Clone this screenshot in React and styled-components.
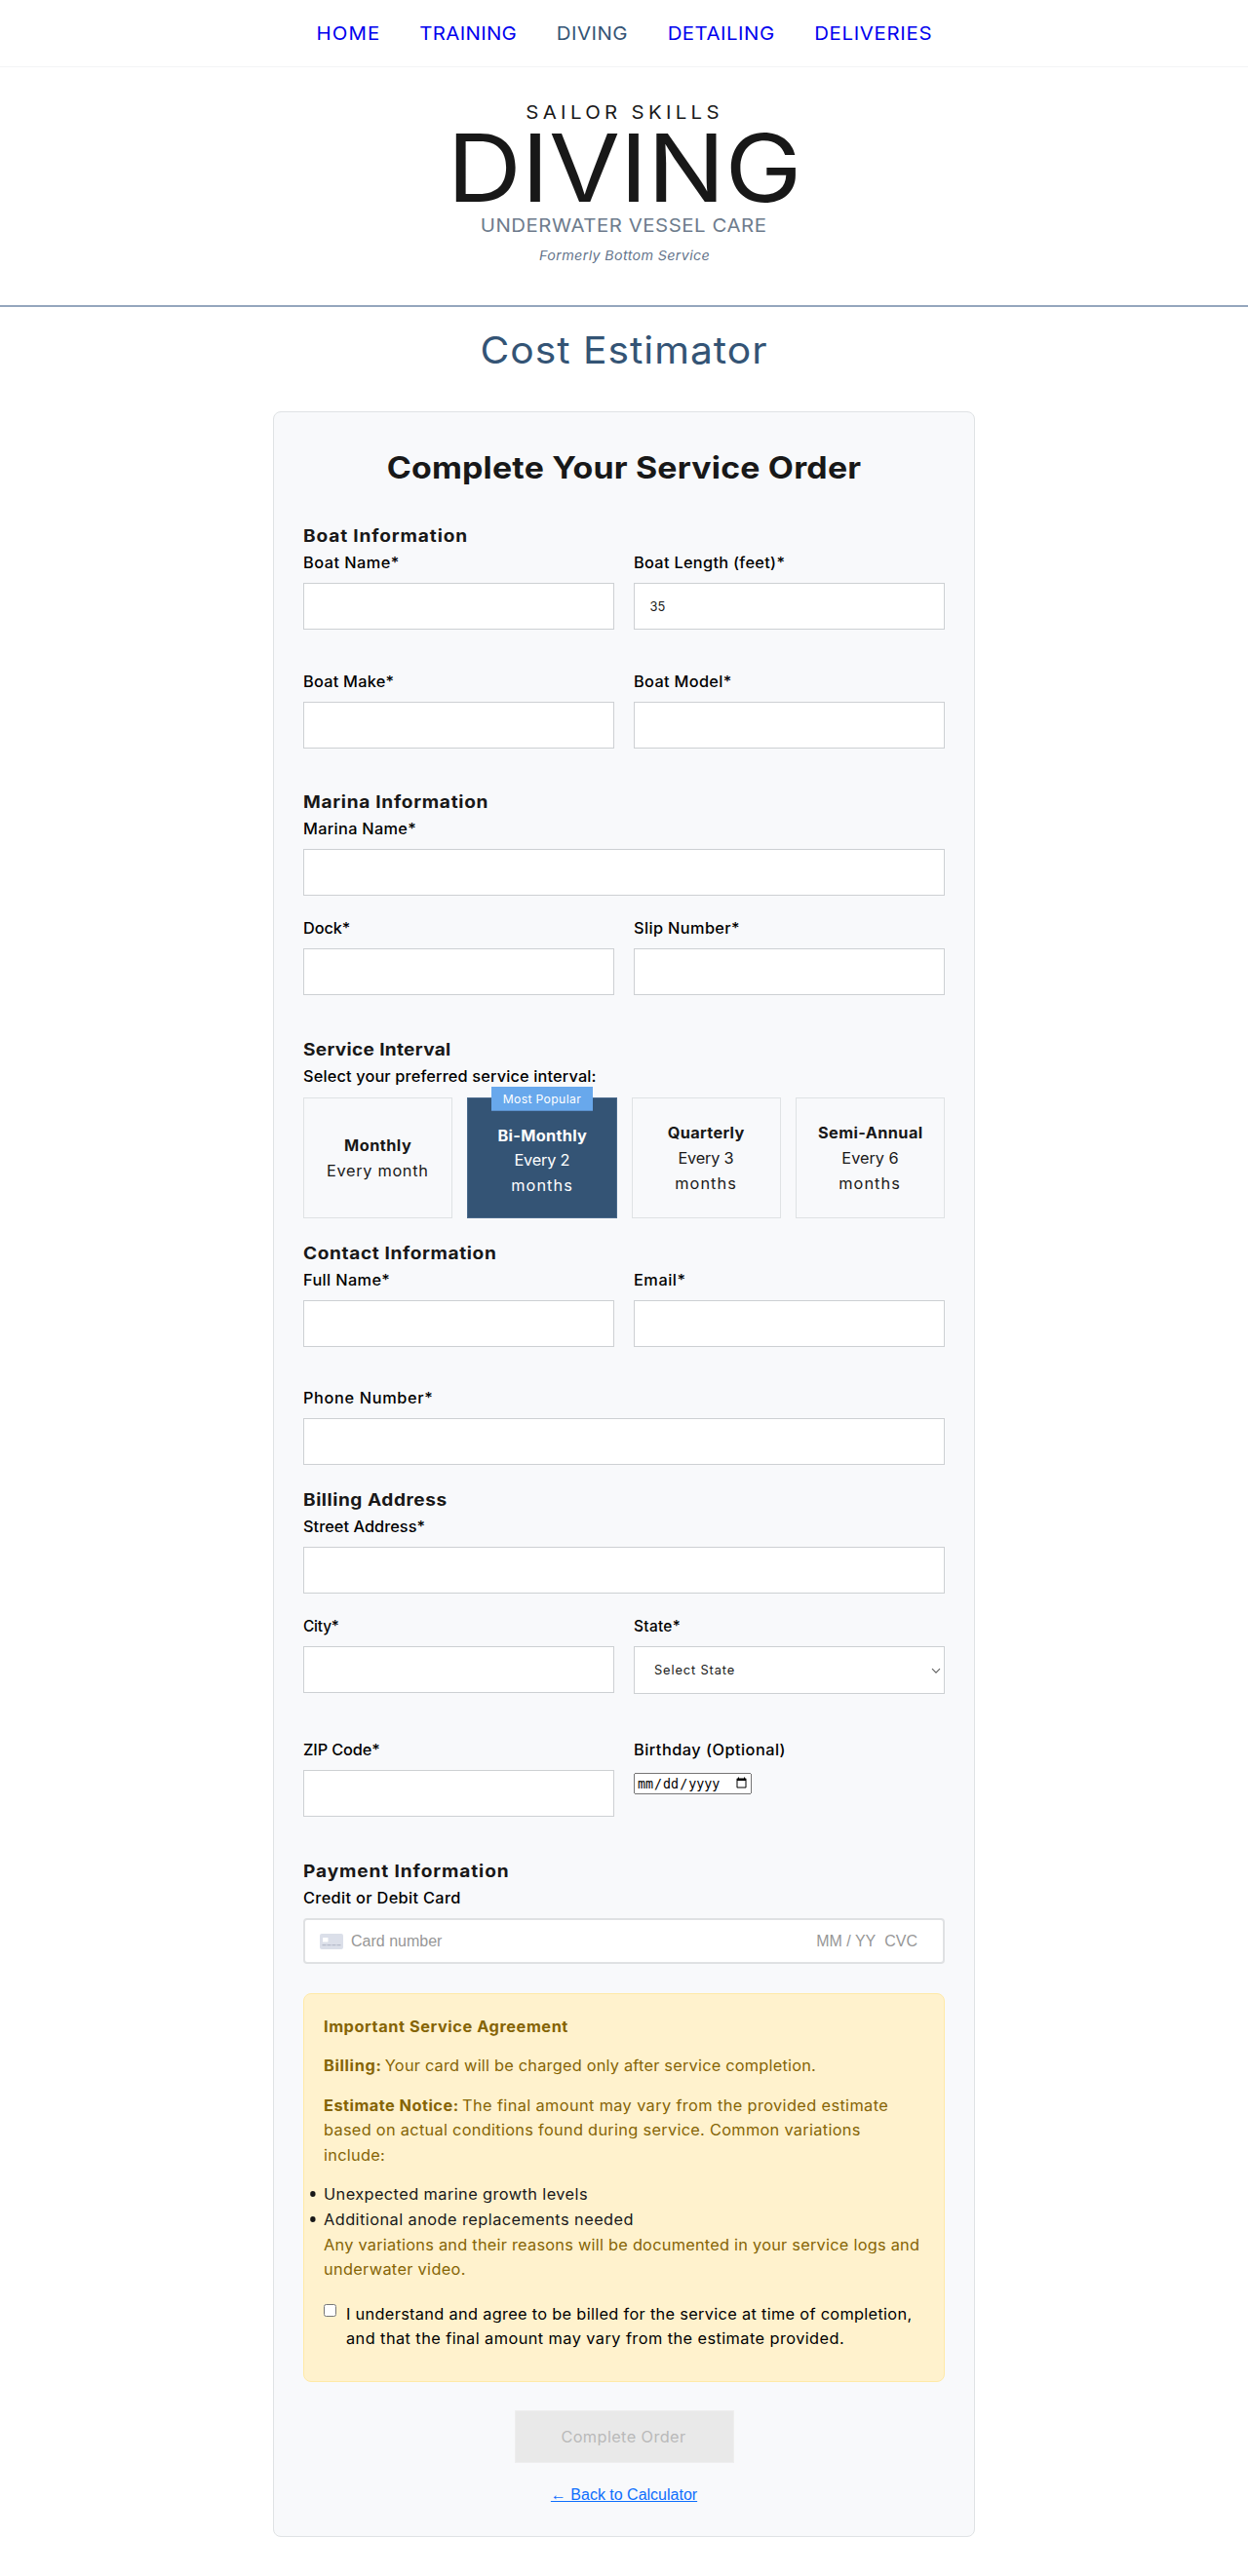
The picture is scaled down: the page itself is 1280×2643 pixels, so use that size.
import React from "react";
import styled, { createGlobalStyle, css } from "styled-components";

const sans = `Inter, "Open Sans", sans-serif`;
const arial = `"Liberation Sans", Arial, sans-serif`;

/* Wide letterforms: stretches the glyphs and sets the tracking of one text. */
const wide = css`
  letter-spacing: ${(p) => p.$ls || 0}px;
  transform: scaleX(${(p) => p.$stretch || 1.06});
  transform-origin: left center;
`;

const wideCentered = css`
  ${wide}
  transform-origin: center;
`;

const GlobalStyle = createGlobalStyle`
  *, *::before, *::after { box-sizing: border-box; }
  body { margin: 0; background: #fff; font-family: ${sans}; font-size: 15.4px; color: #181818; }
`;

const Nav = styled.nav`
  height: 69px;
  border-bottom: 1px solid #f3f4f5;
`;

const NavList = styled.div`
  display: flex;
  justify-content: center;
  gap: 38.7px;
  transform: scaleX(1.06);
`;

const NavLink = styled.a`
  letter-spacing: ${(p) => p.$ls}px;
  margin-right: ${(p) => -p.$ls}px;
  font-size: 19.26px;
  line-height: 68px;
  text-decoration: none;
  color: ${(p) => (p.$active ? "#345475" : "#0000ee")};
`;

const Header = styled.header`
  display: flex;
  flex-direction: column;
  align-items: center;
  height: 246px;
  padding-top: 31px;
  border-bottom: 2px solid #94a6bd;
`;

const Brand = styled.div`
  ${wideCentered}
  padding-left: 2px;
  font-size: 19.26px;
  line-height: 30px;
`;

const Wordmark = styled.h1`
  ${wideCentered}
  margin: 0;
  font-size: 96.3px;
  font-weight: 400;
  line-height: 84px;
`;

const Tagline = styled.div`
  ${wideCentered}
  margin-top: 2px;
  font-size: 19.26px;
  line-height: 30px;
  color: #6d7b8c;
`;

const Former = styled.div`
  ${wideCentered}
  margin-top: 4px;
  padding-left: 1px;
  font-size: 13.5px;
  font-style: italic;
  line-height: 24px;
  color: #64748b;
`;

const PageTitle = styled.h2`
  ${wideCentered}
  margin: 14px 0 33px;
  font-size: 38.5px;
  font-weight: 400;
  line-height: 60px;
  text-align: center;
  color: #345475;
`;

const Card = styled.main`
  width: 720px;
  margin: 0 auto 40px;
  padding: 36.8px 30px 32px;
  background: #f8f9fb;
  border: 1px solid #dfe2e4;
  border-radius: 8px;
`;

const CardTitle = styled.h2`
  ${wideCentered}
  margin: 0 0 35.9px;
  font-size: 30.8px;
  font-weight: 700;
  line-height: 40px;
  text-align: center;
  white-space: nowrap;
`;

const Section = styled.section`
  margin-bottom: ${(p) => p.$after}px;
`;

const Heading = styled.h3`
  ${wide}
  width: fit-content;
  margin: 0 0 1px;
  font-size: 17.33px;
  font-weight: 700;
  line-height: 28px;
`;

const Row = styled.div`
  display: grid;
  grid-template-columns: ${(p) => (p.$single ? "1fr" : "1fr 1fr")};
  column-gap: 20px;
  align-items: start;
  margin-bottom: ${(p) => p.$after || 0}px;
`;

const Label = styled.label`
  ${wide}
  display: block;
  width: fit-content;
  height: 26px;
  margin-bottom: 7.5px;
  font-weight: 500;
  line-height: 26px;
  color: #000;
  white-space: nowrap;
`;

const Input = styled.input`
  display: block;
  width: 100%;
  height: 48px;
  padding: 0 15.5px;
  background: #fff;
  border: 1px solid #cdd0d3;
  border-radius: 0;
  font: 400 12.84px ${sans};
  color: #181818;
`;

const SelectBox = styled.div`
  position: relative;
`;

const Select = styled.select`
  display: block;
  appearance: none;
  width: 100%;
  height: 49px;
  padding: 0 0 0 20px;
  background: #fff;
  border: 1px solid #cdd0d3;
  border-radius: 0;
  font: 400 12.84px ${sans};
  letter-spacing: 0.86px;
  color: #181818;
`;

const Chevron = styled.svg`
  position: absolute;
  top: 22px;
  right: 4px;
  pointer-events: none;
`;

const DateInput = styled.input`
  display: block;
  width: 121px;
  height: 22px;
  margin-top: 10.5px;
`;

const Tiles = styled.div`
  display: grid;
  grid-template-columns: repeat(4, 1fr);
  gap: 15px;
  margin-top: 8.8px;
`;

const Tile = styled.div`
  position: relative;
  display: flex;
  flex-direction: column;
  align-items: center;
  justify-content: center;
  height: 123.5px;
  padding-top: ${(p) => (p.$selected ? 6 : 1)}px;
  line-height: 25.6px;
  background: ${(p) => (p.$selected ? "#345475" : "transparent")};
  border: 1px solid ${(p) => (p.$selected ? "#4a6a8c" : "#dfe2e4")};
  color: ${(p) => (p.$selected ? "#fff" : "#181818")};
`;

const TileName = styled.strong`
  ${wideCentered}
  white-space: nowrap;
`;

const TileText = styled.span`
  ${wideCentered}
`;

const Badge = styled.span`
  position: absolute;
  top: -12px;
  left: 50%;
  width: 104px;
  height: 25px;
  transform: translateX(-50%);
  border-bottom: 1px solid #5a90cb;
  background: #68a8ec;
  font-size: 12.2px;
  line-height: 25px;
  letter-spacing: 0.35px;
  text-align: center;
  color: #fff;
`;

const CardField = styled.div`
  display: flex;
  align-items: center;
  height: 47px;
  padding: 0 26px 0 15px;
  background: #fff;
  border: 2px solid #dfe1e3;
  border-radius: 4px;
  font: 16px ${arial};
  color: #979797;
`;

const CardNumber = styled.span`
  flex: 1;
  margin-left: 8px;
`;

const Expiry = styled.span`
  margin-right: 9px;
`;

const Agreement = styled.section`
  padding: 20.6px 20px 30px;
  background: #fff2cd;
  border: 1px solid #ffeaa7;
  border-radius: 8px;
  line-height: 25.6px;
  color: #856404;
`;

const AgreementTitle = styled.h4`
  ${wide}
  width: fit-content;
  margin: 0 0 14.4px;
  font-size: 15.4px;
  font-weight: 700;
`;

const Paragraph = styled.p`
  margin: 0 0 ${(p) => p.$after}px;
`;

const Line = styled.span`
  ${wide}
  display: block;
  width: fit-content;
  white-space: nowrap;
`;

const Strong = styled.strong`
  letter-spacing: ${(p) => p.$ls}px;
  margin-right: -1.4px;
`;

const Reasons = styled.ul`
  margin: 0;
  padding: 0;
  list-style: none;
  color: #181818;
`;

const Reason = styled.li`
  ${wide}
  width: fit-content;
  line-height: 26px;

  &::before {
    content: "";
    display: inline-block;
    width: 5.6px;
    height: 6px;
    margin: 0 7.6px 0 -13.2px;
    border-radius: 50%;
    background: #181818;
    vertical-align: 2.2px;
  }
`;

const Consent = styled.label`
  display: flex;
  align-items: flex-start;
  color: #000;
`;

const Checkbox = styled.input`
  width: 13px;
  height: 13px;
  margin: 2px 10px 0 0;
`;

const Submit = styled.button`
  display: block;
  width: 225px;
  height: 54px;
  margin: 29.2px auto 22.5px;
  padding: 0 1.5px 0 0;
  background: #e9e9e9;
  border: 1px solid #eeeeee;
  font: 400 15.4px ${sans};
  color: #b9b9b9;
`;

const SubmitText = styled.span`
  ${wideCentered}
  display: inline-block;
`;

const BackLink = styled.a`
  display: block;
  width: fit-content;
  margin: 0 auto;
  font: 16px/20px ${arial};
  color: #0d6efd;
  text-decoration: underline;
`;

const Field = ({ label, ls, stretch, children, value }) => (
  <div>
    <Label $ls={ls} $stretch={stretch}>{label}</Label>
    {children || <Input type="text" defaultValue={value} />}
  </div>
);

const CardIcon = () => (
  <svg width="24" height="16" viewBox="0 0 24 16">
    <rect width="24" height="16" rx="2" fill="#dbdfe9" />
    <rect x="3" y="4" width="5.5" height="4.5" rx="0.6" fill="#fff" />
    <path d="M2.5 11.7h19" stroke="#b5bbca" strokeWidth="1.2" strokeDasharray="4 1" />
  </svg>
);

const links = [
  ["HOME", 1.07],
  ["TRAINING", 0.29],
  ["DIVING", 0.45],
  ["DETAILING", 0.46],
  ["DELIVERIES", 0.63],
];

const intervals = [
  { name: "Monthly", ls: 0.43, lines: [["Every month", 0.64]] },
  { name: "Bi-Monthly", ls: 0.28, lines: [["Every 2", -0.18], ["months", 1]], popular: true },
  { name: "Quarterly", ls: 0.29, lines: [["Every 3", -0.18], ["months", 1]] },
  { name: "Semi-Annual", ls: 0.37, lines: [["Every 6", -0.03], ["months", 1]] },
];

export default function App() {
  return (
    <>
      <GlobalStyle />
      <Nav>
        <NavList>
          {links.map(([text, ls]) => (
            <NavLink key={text} $ls={ls} $active={text === "DIVING"}>{text}</NavLink>
          ))}
        </NavList>
      </Nav>
      <Header>
        <Brand $ls={4.06}>SAILOR SKILLS</Brand>
        <Wordmark $ls={-0.2} $stretch={1.1}>DIVING</Wordmark>
        <Tagline $ls={0.49}>UNDERWATER VESSEL CARE</Tagline>
        <Former $ls={0.33}>Formerly Bottom Service</Former>
      </Header>
      <PageTitle $ls={0.92}>Cost Estimator</PageTitle>
      <Card>
        <CardTitle $ls={0.18} $stretch={1.1}>Complete Your Service Order</CardTitle>

        <Section $after={40.4}>
          <Heading $ls={0.78} $stretch={1.1}>Boat Information</Heading>
          <Row $after={40.6}>
            <Field label="Boat Name*" ls={0.44} />
            <Field label="Boat Length (feet)*" ls={0.29} value="35" />
          </Row>
          <Row>
            <Field label="Boat Make*" ls={0.23} />
            <Field label="Boat Model*" ls={0.31} />
          </Row>
        </Section>

        <Section $after={41.2}>
          <Heading $ls={0.64} $stretch={1.1}>Marina Information</Heading>
          <Row $single $after={20.8}>
            <Field label="Marina Name*" ls={0.29} />
          </Row>
          <Row>
            <Field label="Dock*" ls={-0.09} />
            <Field label="Slip Number*" ls={0.36} />
          </Row>
        </Section>

        <Section $after={21.7}>
          <Heading $ls={0.29} $stretch={1.1}>Service Interval</Heading>
          <Field label="Select your preferred service interval:" ls={0.14}>
            <Tiles>
              {intervals.map((it) => (
                <Tile key={it.name} $selected={it.popular}>
                  {it.popular && <Badge>Most Popular</Badge>}
                  <TileName $ls={it.ls}>{it.name}</TileName>
                  {it.lines.map(([text, ls]) => (
                    <TileText key={text} $ls={ls}>{text}</TileText>
                  ))}
                </Tile>
              ))}
            </Tiles>
          </Field>
        </Section>

        <Section $after={21.3}>
          <Heading $ls={0.56} $stretch={1.1}>Contact Information</Heading>
          <Row $after={39.7}>
            <Field label="Full Name*" ls={0.34} />
            <Field label="Email*" ls={0.5} />
          </Row>
          <Row $single>
            <Field label="Phone Number*" ls={0.61} />
          </Row>
        </Section>

        <Section $after={41.5}>
          <Heading $ls={0.49} $stretch={1.1}>Billing Address</Heading>
          <Row $single $after={20.8}>
            <Field label="Street Address*" ls={0.04} />
          </Row>
          <Row $after={44.2}>
            <Field label="City*" ls={-0.19} stretch={1} />
            <Field label="State*" ls={0.32} stretch={1}>
              <SelectBox>
                <Select>
                  <option>Select State</option>
                </Select>
                <Chevron width="10" height="7" viewBox="0 0 10 7" fill="none">
                  <path d="M1 1.2 5 5.2 9 1.2" stroke="#5f5f5f" strokeWidth="1.1" />
                </Chevron>
              </SelectBox>
            </Field>
          </Row>
          <Row>
            <Field label="ZIP Code*" ls={-0.11} />
            <Field label="Birthday (Optional)" ls={0.45}>
              <DateInput type="date" />
            </Field>
          </Row>
        </Section>

        <Section $after={30}>
          <Heading $ls={0.81} $stretch={1.1}>Payment Information</Heading>
          <Field label="Credit or Debit Card" ls={0.32}>
            <CardField>
              <CardIcon />
              <CardNumber>Card number</CardNumber>
              <Expiry>MM / YY</Expiry>
              <span>CVC</span>
            </CardField>
          </Field>
        </Section>

        <Agreement>
          <AgreementTitle $ls={0.54}>Important Service Agreement</AgreementTitle>
          <Paragraph $after={15.4}>
            <Line $ls={0.21}>
              <Strong $ls={0.6}>Billing:</Strong> Your card will be charged only after service completion.
            </Line>
          </Paragraph>
          <Paragraph $after={14.2}>
            <Line $ls={0.36}>
              <Strong $ls={0.46}>Estimate Notice:</Strong> The final amount may vary from the provided estimate
            </Line>
            <Line $ls={0.29}>based on actual conditions found during service. Common variations</Line>
            <Line $ls={0.28}>include:</Line>
          </Paragraph>
          <Reasons>
            <Reason $ls={0.4}>Unexpected marine growth levels</Reason>
            <Reason $ls={0.43}>Additional anode replacements needed</Reason>
          </Reasons>
          <Paragraph $after={19.8}>
            <Line $ls={0.24}>Any variations and their reasons will be documented in your service logs and</Line>
            <Line $ls={0.31}>underwater video.</Line>
          </Paragraph>
          <Consent>
            <Checkbox type="checkbox" />
            <span>
              <Line $ls={0.305}>I understand and agree to be billed for the service at time of completion,</Line>
              <Line $ls={0.41}>and that the final amount may vary from the estimate provided.</Line>
            </span>
          </Consent>
        </Agreement>

        <Submit disabled>
          <SubmitText $ls={0.36}>Complete Order</SubmitText>
        </Submit>
        <BackLink href="#">← Back to Calculator</BackLink>
      </Card>
    </>
  );
}
